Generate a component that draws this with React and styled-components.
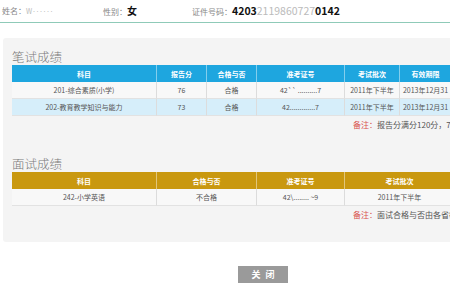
import React from "react";
import styled, { createGlobalStyle } from "styled-components";

const Global = createGlobalStyle`
  html, body { margin: 0; padding: 0; background: #fff; overflow: hidden; }
  body { font-family: "Noto Sans CJK SC", "Noto Sans", sans-serif; }
`;

const Page = styled.div`
  width: 450px;
  height: 290px;
  overflow: hidden;
`;

const InfoBar = styled.div`
  display: grid;
  grid-template-columns: 101px 89px auto;
  align-items: center;
  height: 23px;
  padding-left: 2px;
  border-bottom: 1px solid #8fcab8;
  box-sizing: border-box;
`;

const Field = styled.div`
  display: flex;
  align-items: baseline;
  font-size: 8px;
  color: #888;
  line-height: 1;
`;

const Value = styled.span`
  color: ${(p) => (p.$faint ? "#bbb" : "#111")};
  font-weight: ${(p) => (p.$faint ? 400 : 700)};
  font-size: ${(p) => p.$size || 10}px;
`;

const Panel = styled.div`
  margin: 15px 0 0 3px;
  background: #f4f4f4;
  border-radius: 3px 0 0 3px;
  padding: 11px 0 22px 9px;
  overflow: hidden;
`;

const Title = styled.div`
  font-size: 12.5px;
  color: #7a7a7a;
  line-height: 15px;
  margin: ${(p) => p.$top || 0}px 0 1px 0;
  font-weight: 300;
`;

const Table = styled.div`
  display: grid;
  grid-template-columns: ${(p) => p.$cols};
  width: max-content;
`;

const Head = styled.div`
  background: ${(p) => p.$color};
  color: #fff;
  font-size: 7px;
  font-weight: 700;
  height: 17px;
  display: flex;
  align-items: center;
  justify-content: center;
  border-right: 1px solid rgba(255, 255, 255, 0.45);
`;

const Cell = styled.div`
  background: ${(p) => (p.$alt ? "#d6eefa" : "#f8f8f8")};
  color: #555;
  font-size: 7px;
  height: 17px;
  display: flex;
  align-items: center;
  justify-content: center;
  border-right: 1px solid #dcdcdc;
  border-bottom: 1px solid #e2e2e2;
  box-sizing: border-box;
  white-space: nowrap;
  overflow: hidden;
`;

const Note = styled.div`
  margin: 4px 0 0 341px;
  font-size: 8px;
  color: #555;
  white-space: nowrap;
  line-height: 10px;
  overflow: hidden;
`;

const Red = styled.span`
  color: #d9534f;
`;

const Footer = styled.div`
  display: flex;
  padding: 24px 0 0 238px;
`;

const Button = styled.button`
  width: 50px;
  height: 17px;
  border: none;
  background: #9a9a9a;
  color: #fff;
  font-family: inherit;
  font-size: 9px;
  font-weight: 700;
  letter-spacing: 5px;
  padding: 0 0 0 5px;
`;

const written = {
  cols: "145px 50px 50px 88px 55px 52px",
  head: ["科目", "报告分", "合格与否", "准考证号", "考试批次", "有效期限"],
  rows: [
    ["201-综合素质(小学)", "76", "合格", "42`` ..........7", "2011年下半年", "2013年12月31"],
    ["202-教育教学知识与能力", "73", "合格", "42.............7", "2011年下半年", "2013年12月31"],
  ],
};

const interview = {
  cols: "145px 100px 88px 110px",
  head: ["科目", "合格与否", "准考证号", "考试批次"],
  rows: [["242-小学英语", "不合格", "42\\........ ~9", "2011年下半年"]],
};

function ScoreTable({ data, color }) {
  return (
    <Table $cols={data.cols}>
      {data.head.map((h) => (
        <Head key={h} $color={color}>{h}</Head>
      ))}
      {data.rows.map((r, i) =>
        r.map((c, j) => (
          <Cell key={i + "-" + j} $alt={i % 2 === 1}>{c}</Cell>
        ))
      )}
    </Table>
  );
}

export default function App() {
  return (
    <Page>
      <Global />
      <InfoBar>
        <Field>
          姓名：<Value $faint $size={7}>W‥‥‥</Value>
        </Field>
        <Field>
          性别：<Value>女</Value>
        </Field>
        <Field>
          证件号码：<Value $size={10.5}>4203</Value>
          <Value $faint $size={10.5}>2119860727</Value>
          <Value $size={10.5}>0142</Value>
        </Field>
      </InfoBar>
      <Panel>
        <Title>笔试成绩</Title>
        <ScoreTable data={written} color="#1ea6df" />
        <Note>
          <Red>备注：</Red>报告分满分120分，7
        </Note>
        <Title $top={26}>面试成绩</Title>
        <ScoreTable data={interview} color="#c9980f" />
        <Note>
          <Red>备注：</Red>面试合格与否由各省教
        </Note>
      </Panel>
      <Footer>
        <Button>关闭</Button>
      </Footer>
    </Page>
  );
}
